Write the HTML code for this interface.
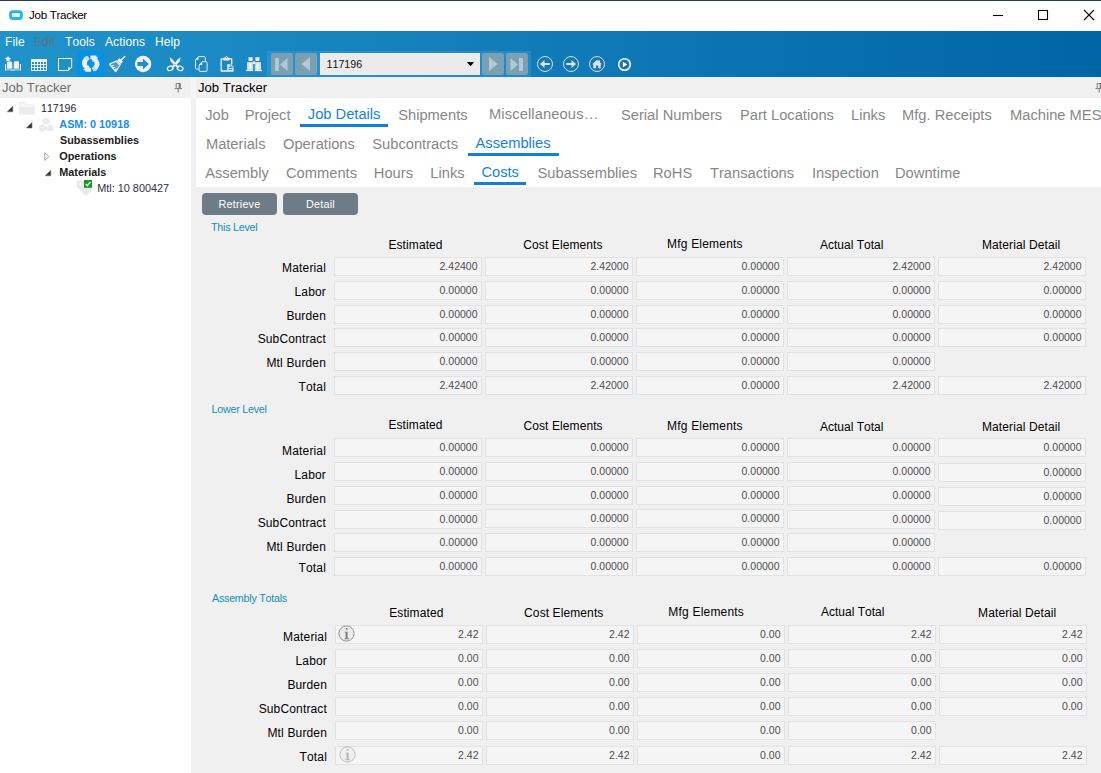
<!DOCTYPE html>
<html><head><meta charset="utf-8"><title>Job Tracker</title>
<style>
html,body{margin:0;padding:0;}
html{width:1101px;height:773px;overflow:hidden;background:#f0f0f0;}
body{font-kerning:none;width:1101px;height:773px;position:relative;overflow:hidden;background:#f0f0f0;font-family:"Liberation Sans",sans-serif;}
.t{position:absolute;white-space:nowrap;}
.a{position:absolute;}
.f{position:absolute;box-sizing:border-box;width:148px;height:19px;background:#f5f5f5;border:1px solid #e2e2e2;}
.v{position:absolute;right:3.5px;top:0;font-size:10.5px;line-height:16px;color:#4e4e4e;white-space:nowrap;}
.nb{position:absolute;top:53px;width:22px;height:22px;border-radius:2px;background:#7ba0b4;}
</style></head><body><div class="a" style="left:0;top:0;width:1101px;height:773px;overflow:hidden;">

<div class="a" style="left:0;top:0;width:1101px;height:31px;background:#fff;"></div>
<div class="a" style="left:0;top:0;width:1101px;height:1px;background:#2b3a55;"></div>
<svg class="a" style="left:8px;top:10px" width="16" height="12" viewBox="0 0 16 12"><rect x="2.7" y="1.7" width="10.6" height="6.8" rx="2" fill="#fff" stroke="#22b8ea" stroke-width="3"/></svg>
<div class="t" style="top:5.48px;font-size:11.6px;color:#000;line-height:20px;left:29.00px;letter-spacing:-0.3px;">Job Tracker</div>
<svg class="a" style="left:985px;top:5px" width="116" height="22" viewBox="0 0 116 22"><g stroke="#000" stroke-width="1.1" fill="none"><path d="M8 10.5H18"/><rect x="53.5" y="5.5" width="9" height="9"/><path d="M99 5L109 15M109 5L99 15"/></g></svg>
<div class="a" style="left:0;top:31px;width:1101px;height:46px;background:linear-gradient(90deg,#2093cb 0%,#117ab8 50%,#0065a5 100%);"></div>
<div class="t" style="top:31.84px;font-size:12px;color:#fff;line-height:20px;left:5.00px;letter-spacing:0.12px;">File</div>
<div class="t" style="top:31.84px;font-size:12px;color:#66737a;line-height:20px;left:34.00px;letter-spacing:0.12px;">Edit</div>
<div class="t" style="top:31.84px;font-size:12px;color:#fff;line-height:20px;left:65.00px;letter-spacing:0.12px;">Tools</div>
<div class="t" style="top:31.84px;font-size:12px;color:#fff;line-height:20px;left:105.00px;letter-spacing:0.12px;">Actions</div>
<div class="t" style="top:31.84px;font-size:12px;color:#fff;line-height:20px;left:155.00px;letter-spacing:0.12px;">Help</div>
<div class="a" style="left:78px;top:51px;width:26px;height:26px;background:#0491e8;"></div>
<div class="a" style="left:267px;top:51px;width:264px;height:26px;background:rgba(60,170,225,0.35);"></div>
<div class="nb" style="left:271px"></div>
<div class="nb" style="left:295px"></div>
<div class="nb" style="left:482px"></div>
<div class="nb" style="left:506px"></div>
<svg class="a" style="left:271px;top:53px" width="260" height="22" viewBox="0 0 260 22"><g fill="#b2c8d4"><rect x="4" y="5" width="4" height="13"/><path d="M16.5 5V18L9 11.5Z"/><path d="M39 4V18L30.5 11Z"/><path d="M218 4V18L226.5 11Z"/><path d="M239.5 5V18L247 11.5Z"/><rect x="248" y="5" width="4" height="13"/></g></svg>
<div class="a" style="left:320px;top:53px;width:160px;height:22px;background:#ebebeb;"></div>
<div class="t" style="top:54.29px;font-size:10.7px;color:#111;line-height:20px;left:326.50px;">117196</div>
<svg class="a" style="left:466px;top:61px" width="9" height="6" viewBox="0 0 9 6"><path d="M0.8 1H8.2L4.5 5.2Z" fill="#000"/></svg>
<svg class="a" style="left:0;top:51px" width="660" height="26" viewBox="0 51 660 26">
<g fill="#f3efec" stroke="none">
<!-- book with star -->
<path d="M8 55.700L9 57.700L11.200 58L9.600 59.500L10 61.600L8 60.600L6 61.600L6.400 59.500L4.800 58L7 57.700Z"/>
<rect x="7" y="61.500" width="5" height="7.300" rx="0.800"/>
<rect x="14" y="61.300" width="5" height="7.500" rx="0.800"/>
<rect x="5" y="64" width="1" height="6.300"/>
<rect x="20" y="64" width="1" height="6.300"/>
<rect x="5" y="69.400" width="16" height="0.900" opacity="0.850"/>
<rect x="11" y="70" width="4" height="0.900" opacity="0.600"/>
<rect x="12.300" y="63" width="1.400" height="6" opacity="0.350"/>
<!-- grid -->
<path fill-rule="evenodd" d="M31 59H47V71H31Z M32 62h2v2h-2Z M35 62h2v2h-2Z M38 62h2v2h-2Z M41 62h2v2h-2Z M44 62h2v2h-2Z M32 65h2v2h-2Z M35 65h2v2h-2Z M38 65h2v2h-2Z M41 65h2v2h-2Z M44 65h2v2h-2Z M32 68h2v2h-2Z M35 68h2v2h-2Z M38 68h2v2h-2Z M41 68h2v2h-2Z M44 68h2v2h-2Z"/>
<!-- note -->
<path d="M58.500 58.500H71.700V67.500L68.200 70.500H58.500Z" fill="none" stroke="#f3efec" stroke-width="1"/>
<path d="M68 67.400H71.800L68 70.800Z"/>
</g>
<!-- refresh -->
<g><path d="M86.600 56L88.100 56.500L89.300 58.200L89.600 59.100L87.800 61.100L86.900 62.800L87.100 65.100L88.100 65.800L88.800 65.300L89.300 67.100L89.600 67.800L91.100 68.200L91.100 71.700L85.200 71.700L85.200 70.700L83.500 69.800L83.400 69.200L84.700 68.800L83 66.800L82.100 64.500L82 62.100L82.700 60.100L83.900 58.100L85.200 56.700Z" fill="#efedec"/><g fill="#0491e8" opacity="0.700"><rect x="85.400" y="57.600" width="0.800" height="0.800"/><rect x="86.500" y="58.700" width="0.800" height="0.800"/><rect x="87.600" y="59.800" width="0.800" height="0.800"/><rect x="86.700" y="56.700" width="0.800" height="0.800"/><rect x="87.900" y="57.800" width="0.800" height="0.800"/></g></g>
<g transform="rotate(180 90.750 63.600)"><path d="M86.600 56L88.100 56.500L89.300 58.200L89.600 59.100L87.800 61.100L86.900 62.800L87.100 65.100L88.100 65.800L88.800 65.300L89.300 67.100L89.600 67.800L91.100 68.200L91.100 71.700L85.200 71.700L85.200 70.700L83.500 69.800L83.400 69.200L84.700 68.800L83 66.800L82.100 64.500L82 62.100L82.700 60.100L83.900 58.100L85.200 56.700Z" fill="#efedec"/><g fill="#0491e8" opacity="0.700"><rect x="85.400" y="57.600" width="0.800" height="0.800"/><rect x="86.500" y="58.700" width="0.800" height="0.800"/><rect x="87.600" y="59.800" width="0.800" height="0.800"/><rect x="86.700" y="56.700" width="0.800" height="0.800"/><rect x="87.900" y="57.800" width="0.800" height="0.800"/></g></g>
<!-- broom -->
<g stroke="#f3efec" fill="none" stroke-linecap="round">
<path d="M124.700 56.500L120.500 60.600" stroke-width="1.600"/>
<path d="M118.300 59.200L121.900 62.900" stroke-width="3" stroke-linecap="butt"/>
<path d="M116.800 60.900L109.600 64L115.700 71.600L120.300 64.500Z" stroke-width="1.300" stroke-linejoin="round" fill="rgba(243,239,236,0.180)"/>
<path d="M111.500 66.400L113.500 65.300M112.900 68.300L115.100 67M114.400 70L116.400 68.800" stroke-width="1"/>
<path d="M116.400 62.100L119.600 65.300" stroke-width="0.900"/>
</g>
<!-- circle arrow -->
<circle cx="143.100" cy="64" r="8.200" fill="#f3efec"/>
<path d="M137.400 62H143V58.800L148.900 64L143 69.300V66H137.400Z" fill="#1d8ec7"/>
<!-- scissors -->
<g fill="#f3efec">
<path d="M169.600 57.200L172.500 59.300L176.600 64.400L179 67L177.800 67.900L174.400 65.600L170.500 61.300Z"/>
<path d="M180.700 57.200L177.800 59.300L173.700 64.400L171.300 67L172.500 67.900L175.900 65.600L179.800 61.300Z"/>
</g>
<circle cx="175.150" cy="64.500" r="0.550" fill="#1d8ec7"/>
<g fill="none" stroke="#f3efec" stroke-width="1.300">
<ellipse cx="170.200" cy="68.300" rx="2.900" ry="2.150" transform="rotate(-18 170.200 68.300)"/>
<ellipse cx="180.100" cy="68.300" rx="2.900" ry="2.150" transform="rotate(18 180.100 68.300)"/>
</g>
<!-- copy -->
<g fill="none" stroke="#e9edf0" stroke-width="1" stroke-linejoin="round">
<path d="M198.500 56.600H204.200Q205.300 56.600 205.300 57.800V61.300M198.500 56.600L195.500 59.800V68Q195.500 69.100 196.600 69.100H198.600"/>
<path d="M202.200 61.700H206Q207.100 61.700 207.100 62.800V70.300Q207.100 71.400 206 71.400H200.200Q199.100 71.400 199.100 70.300V65Z"/>
</g>
<path d="M198.500 56.800V59.800H195.700Z" fill="#f3efec"/>
<path d="M202.200 61.900V65H199.300Z" fill="#f3efec"/>
<!-- paste -->
<g fill="none" stroke="#f3efec" stroke-width="1.300" stroke-linejoin="round">
<path d="M227.500 71H221.200V58.800H231.700V64.500"/>
</g>
<path fill-rule="evenodd" d="M223.300 58.300Q223.300 57.600 224.500 57.600H225.100Q225.300 56 226.400 56Q227.600 56 227.800 57.600H228.400Q229.500 57.600 229.500 58.300V60.400H223.300Z M225.800 57.300a0.600 0.600 0 1 0 1.200 0a0.600 0.600 0 1 0 -1.200 0Z" fill="#f3efec"/>
<path d="M227.200 64.300H231.200L233.600 66.700V71.800H227.200Z" fill="#e4ebef"/>
<path d="M228.500 67.500H232.300M228.500 69.500H232.300" stroke="#1a86c2" stroke-width="0.900"/>
<path d="M230.700 64.600V67H233.300" stroke="#1a86c2" stroke-width="0.700" fill="none"/>
<!-- binoculars -->
<g fill="#f3efec">
<path d="M248.300 57.200H252.800L252.400 60.900H248.700Z"/>
<path d="M255.200 57.200H259.700L259.300 60.900H255.600Z"/>
<rect x="247" y="62.200" width="6.200" height="7.600"/>
<rect x="254.800" y="62.200" width="6.200" height="7.600"/>
<rect x="246.100" y="69.800" width="7.100" height="1.300"/>
<rect x="254.800" y="69.800" width="7.200" height="1.300"/>
<rect x="253" y="61.300" width="2" height="2.600"/>
</g>
<g stroke="#2a90c8" stroke-width="0.500" opacity="0.600">
<path d="M248 62.600V69.500M252.300 62.600V69.500M255.700 62.600V69.500M260 62.600V69.500"/>
</g>
<!-- nav circles -->
<g fill="none" stroke="#d4e0e8" stroke-width="1">
<circle cx="545" cy="64" r="7.500"/>
<circle cx="571" cy="64" r="7.500"/>
<circle cx="597" cy="64" r="7.500"/>
</g>
<g fill="#e4e2e0">
<path d="M540 64L544.500 60V62.900H549.800V65.100H544.500V68Z"/>
<path d="M576 64L571.500 60V62.900H566.200V65.100H571.500V68Z"/>
<path d="M592.300 64.300L597 59.800L598.500 61.200V60.200H600V62.600L601.700 64.300H600.700V68.300H598.200V65.500H596V68.300H593.300V64.300Z"/>
</g>
<circle cx="624.500" cy="64.500" r="5.800" fill="none" stroke="#fff" stroke-width="1.500"/>
<path d="M622.900 61.700V67.300L627.300 64.500Z" fill="#fff"/>
</svg>

<div class="a" style="left:0;top:77px;width:1101px;height:21px;background:#f0f0f0;"></div>
<div class="a" style="left:0;top:98px;width:191px;height:675px;background:#fff;"></div>
<div class="a" style="left:191px;top:77px;width:5px;height:21px;background:#f5f5f5;"></div>
<div class="a" style="left:196px;top:98px;width:905px;height:89px;background:#fff;"></div>
<div class="t" style="top:78.46px;font-size:13.1px;color:#6e6e6e;line-height:20px;left:2.00px;">Job Tracker</div>
<div class="t" style="top:78.46px;font-size:13.1px;color:#000;line-height:20px;left:198.00px;">Job Tracker</div>
<svg class="a" style="left:174px;top:82px" width="9" height="11" viewBox="0 0 9 11"><path d="M2.2 1.5H6.2V6.2" fill="none" stroke="#7a7a7a" stroke-width="1"/><path d="M2.2 1.5V6.2" stroke="#7a7a7a" stroke-width="1" fill="none"/><rect x="4.7" y="1.5" width="1.8" height="5" fill="#7a7a7a"/><path d="M0.5 6.6H8" stroke="#7a7a7a" stroke-width="1"/><path d="M4.2 7V10.5" stroke="#7a7a7a" stroke-width="1"/></svg>
<svg class="a" style="left:1095px;top:82px" width="9" height="11" viewBox="0 0 9 11"><path d="M2.2 1.5H6.2V6.2" fill="none" stroke="#7a7a7a" stroke-width="1"/><path d="M2.2 1.5V6.2" stroke="#7a7a7a" stroke-width="1" fill="none"/><rect x="4.7" y="1.5" width="1.8" height="5" fill="#7a7a7a"/><path d="M0.5 6.6H8" stroke="#7a7a7a" stroke-width="1"/><path d="M4.2 7V10.5" stroke="#7a7a7a" stroke-width="1"/></svg>
<div class="t" style="top:97.83px;font-size:10.6px;color:#2a2033;line-height:20px;left:41.00px;">117196</div>
<div class="t" style="top:113.74px;font-size:10.85px;color:#158cf0;line-height:20px;font-weight:bold;left:59.30px;">ASM: 0 10918</div>
<div class="t" style="top:129.74px;font-size:10.85px;color:#1c1c1c;line-height:20px;font-weight:bold;left:60.00px;">Subassemblies</div>
<div class="t" style="top:145.64px;font-size:10.85px;color:#1c1c1c;line-height:20px;font-weight:bold;left:59.30px;">Operations</div>
<div class="t" style="top:161.54px;font-size:10.85px;color:#1c1c1c;line-height:20px;font-weight:bold;left:59.30px;">Materials</div>
<div class="t" style="top:177.64px;font-size:10.85px;color:#30304a;line-height:20px;left:97.30px;">Mtl: 10 800427</div>
<svg class="a" style="left:0;top:98px" width="191" height="102" viewBox="0 98 191 102">
<!-- expanders -->
<g fill="#333" stroke="#777" stroke-width="0.600">
<path d="M12.800 106.200V111.800H7.200Z"/>
<path d="M32 122.400V128H26.400Z"/>
<path d="M50.800 170.200V175.800H45.200Z"/>
</g>
<path d="M44.700 152.700V160.500L48.800 156.600Z" fill="#fff" stroke="#a0a0a0" stroke-width="0.900"/>
<!-- folder -->
<g fill="#ececec">
<path d="M19 101.500H24.500L25 102.500V104H19Z" opacity="0.800"/>
<rect x="19" y="103.700" width="16" height="3.200" opacity="0.550"/>
<rect x="19" y="107" width="16" height="7.600"/>
</g>
<!-- cubes -->
<g fill="#e9e9e9">
<path d="M46 117.700L49.700 119.300V123L46 124.800L42.300 123V119.300Z"/>
<path d="M42.300 124.500L46 126.200V130L42.300 131.800L38.700 130V126.200Z"/>
<path d="M49.800 124.500L53.500 126.200V130L49.800 131.800L46.200 130V126.200Z"/>
</g>
<g stroke="#f6f6f6" stroke-width="0.700" fill="none">
<path d="M42.500 119.500L46 121L49.500 119.500M46 121V124.500"/>
<path d="M38.900 126.400L42.300 127.900L45.700 126.400M42.300 127.900V131.500"/>
<path d="M46.400 126.400L49.800 127.900L53.300 126.400M49.800 127.900V131.500"/>
</g>
<!-- tag + check -->
<path d="M76.500 180.500H92V190.500L86 196L76.800 187Z" fill="#e9e9e9"/>
<circle cx="80.500" cy="184" r="1" fill="#fff"/>
<rect x="84" y="180" width="8" height="7.800" fill="#149a1c"/>
<path d="M85.700 183.900L87.400 185.700L90.400 181.800" fill="none" stroke="#fff" stroke-width="1.300"/>
</svg>

<div class="t" style="top:104.91px;font-size:14.7px;color:#878787;line-height:20px;left:205.20px;">Job</div>
<div class="t" style="top:104.91px;font-size:14.7px;color:#878787;line-height:20px;left:244.80px;">Project</div>
<div class="t" style="top:103.91px;font-size:14.7px;color:#1583dc;line-height:20px;left:307.80px;">Job Details</div>
<div class="t" style="top:104.91px;font-size:14.7px;color:#878787;line-height:20px;left:398.20px;">Shipments</div>
<div class="t" style="top:103.91px;font-size:14.7px;color:#878787;line-height:20px;left:489.00px;letter-spacing:0.12px;">Miscellaneous…</div>
<div class="t" style="top:104.91px;font-size:14.7px;color:#878787;line-height:20px;left:621.00px;">Serial Numbers</div>
<div class="t" style="top:104.91px;font-size:14.7px;color:#878787;line-height:20px;left:740.00px;">Part Locations</div>
<div class="t" style="top:104.91px;font-size:14.7px;color:#878787;line-height:20px;left:851.00px;">Links</div>
<div class="t" style="top:104.91px;font-size:14.7px;color:#878787;line-height:20px;left:902.00px;">Mfg. Receipts</div>
<div class="t" style="top:104.91px;font-size:14.7px;color:#878787;line-height:20px;left:1010.00px;">Machine MES</div>
<div class="t" style="top:133.91px;font-size:14.7px;color:#878787;line-height:20px;left:205.90px;">Materials</div>
<div class="t" style="top:133.91px;font-size:14.7px;color:#878787;line-height:20px;left:283.00px;">Operations</div>
<div class="t" style="top:133.91px;font-size:14.7px;color:#878787;line-height:20px;left:372.30px;">Subcontracts</div>
<div class="t" style="top:132.91px;font-size:14.7px;color:#1583dc;line-height:20px;left:475.50px;">Assemblies</div>
<div class="t" style="top:162.91px;font-size:14.7px;color:#878787;line-height:20px;left:205.20px;">Assembly</div>
<div class="t" style="top:162.91px;font-size:14.7px;color:#878787;line-height:20px;left:286.00px;">Comments</div>
<div class="t" style="top:162.91px;font-size:14.7px;color:#878787;line-height:20px;left:373.80px;">Hours</div>
<div class="t" style="top:162.91px;font-size:14.7px;color:#878787;line-height:20px;left:430.30px;">Links</div>
<div class="t" style="top:161.91px;font-size:14.7px;color:#1583dc;line-height:20px;left:481.40px;">Costs</div>
<div class="t" style="top:162.91px;font-size:14.7px;color:#878787;line-height:20px;left:537.50px;">Subassemblies</div>
<div class="t" style="top:162.91px;font-size:14.7px;color:#878787;line-height:20px;left:653.00px;">RoHS</div>
<div class="t" style="top:162.91px;font-size:14.7px;color:#878787;line-height:20px;left:710.00px;">Transactions</div>
<div class="t" style="top:162.91px;font-size:14.7px;color:#878787;line-height:20px;left:812.00px;">Inspection</div>
<div class="t" style="top:162.91px;font-size:14.7px;color:#878787;line-height:20px;left:895.00px;">Downtime</div>
<div class="a" style="left:300px;top:124px;width:88px;height:3px;background:#0f80dc;"></div>
<div class="a" style="left:468px;top:153px;width:91px;height:3px;background:#0f80dc;"></div>
<div class="a" style="left:474px;top:182px;width:52px;height:3px;background:#0f80dc;"></div>
<div class="a" style="left:202px;top:193px;width:75px;height:22px;border-radius:4px;background:#6e7c85;color:#fff;font-size:10.8px;line-height:23px;text-align:center;letter-spacing:0.2px;">Retrieve</div>
<div class="a" style="left:283px;top:193px;width:75px;height:22px;border-radius:4px;background:#6e7c85;color:#fff;font-size:10.8px;line-height:23px;text-align:center;letter-spacing:0.2px;">Detail</div>
<div class="t" style="top:217.28px;font-size:10.75px;color:#1390b7;line-height:20px;left:211.00px;letter-spacing:-0.26px;">This Level</div>
<div class="t" style="top:234.84px;font-size:12px;color:#000;line-height:20px;left:388.40px;letter-spacing:0.1px;">Estimated</div>
<div class="t" style="top:234.84px;font-size:12px;color:#000;line-height:20px;left:523.30px;letter-spacing:0.1px;">Cost Elements</div>
<div class="t" style="top:233.84px;font-size:12px;color:#000;line-height:20px;left:667.00px;letter-spacing:0.2px;">Mfg Elements</div>
<div class="t" style="top:234.84px;font-size:12px;color:#000;line-height:20px;left:820.00px;letter-spacing:0px;">Actual Total</div>
<div class="t" style="top:234.84px;font-size:12px;color:#000;line-height:20px;left:982.00px;letter-spacing:0.1px;">Material Detail</div>
<div class="t" style="top:257.84px;font-size:12px;color:#000;line-height:20px;right:775.00px;text-align:right;letter-spacing:0.15px;">Material</div>
<div class="f" style="left:334px;top:257px"><span class="v">2.42400</span></div>
<div class="f" style="left:485px;top:257px"><span class="v">2.42000</span></div>
<div class="f" style="left:636px;top:257px"><span class="v">0.00000</span></div>
<div class="f" style="left:787px;top:257px"><span class="v">2.42000</span></div>
<div class="f" style="left:938px;top:257px"><span class="v">2.42000</span></div>
<div class="t" style="top:281.84px;font-size:12px;color:#000;line-height:20px;right:775.00px;text-align:right;letter-spacing:0.15px;">Labor</div>
<div class="f" style="left:334px;top:281px"><span class="v">0.00000</span></div>
<div class="f" style="left:485px;top:281px"><span class="v">0.00000</span></div>
<div class="f" style="left:636px;top:281px"><span class="v">0.00000</span></div>
<div class="f" style="left:787px;top:281px"><span class="v">0.00000</span></div>
<div class="f" style="left:938px;top:281px"><span class="v">0.00000</span></div>
<div class="t" style="top:305.84px;font-size:12px;color:#000;line-height:20px;right:775.00px;text-align:right;letter-spacing:0.15px;">Burden</div>
<div class="f" style="left:334px;top:305px"><span class="v">0.00000</span></div>
<div class="f" style="left:485px;top:305px"><span class="v">0.00000</span></div>
<div class="f" style="left:636px;top:305px"><span class="v">0.00000</span></div>
<div class="f" style="left:787px;top:305px"><span class="v">0.00000</span></div>
<div class="f" style="left:938px;top:305px"><span class="v">0.00000</span></div>
<div class="t" style="top:328.84px;font-size:12px;color:#000;line-height:20px;right:775.00px;text-align:right;letter-spacing:0.15px;">SubContract</div>
<div class="f" style="left:334px;top:328px"><span class="v">0.00000</span></div>
<div class="f" style="left:485px;top:328px"><span class="v">0.00000</span></div>
<div class="f" style="left:636px;top:328px"><span class="v">0.00000</span></div>
<div class="f" style="left:787px;top:328px"><span class="v">0.00000</span></div>
<div class="f" style="left:938px;top:328px"><span class="v">0.00000</span></div>
<div class="t" style="top:352.84px;font-size:12px;color:#000;line-height:20px;right:775.00px;text-align:right;letter-spacing:0.15px;">Mtl Burden</div>
<div class="f" style="left:334px;top:352px"><span class="v">0.00000</span></div>
<div class="f" style="left:485px;top:352px"><span class="v">0.00000</span></div>
<div class="f" style="left:636px;top:352px"><span class="v">0.00000</span></div>
<div class="f" style="left:787px;top:352px"><span class="v">0.00000</span></div>
<div class="t" style="top:376.84px;font-size:12px;color:#000;line-height:20px;right:775.00px;text-align:right;letter-spacing:0.15px;">Total</div>
<div class="f" style="left:334px;top:376px"><span class="v">2.42400</span></div>
<div class="f" style="left:485px;top:376px"><span class="v">2.42000</span></div>
<div class="f" style="left:636px;top:376px"><span class="v">0.00000</span></div>
<div class="f" style="left:787px;top:376px"><span class="v">2.42000</span></div>
<div class="f" style="left:938px;top:376px"><span class="v">2.42000</span></div>
<div class="t" style="top:399.28px;font-size:10.75px;color:#1390b7;line-height:20px;left:211.50px;letter-spacing:-0.26px;">Lower Level</div>
<div class="t" style="top:414.84px;font-size:12px;color:#000;line-height:20px;left:388.40px;letter-spacing:0.1px;">Estimated</div>
<div class="t" style="top:415.84px;font-size:12px;color:#000;line-height:20px;left:523.40px;letter-spacing:0.1px;">Cost Elements</div>
<div class="t" style="top:415.84px;font-size:12px;color:#000;line-height:20px;left:667.00px;letter-spacing:0.2px;">Mfg Elements</div>
<div class="t" style="top:416.84px;font-size:12px;color:#000;line-height:20px;left:820.00px;letter-spacing:0px;">Actual Total</div>
<div class="t" style="top:416.84px;font-size:12px;color:#000;line-height:20px;left:982.00px;letter-spacing:0.1px;">Material Detail</div>
<div class="t" style="top:440.84px;font-size:12px;color:#000;line-height:20px;right:775.00px;text-align:right;letter-spacing:0.15px;">Material</div>
<div class="f" style="left:334px;top:438px"><span class="v">0.00000</span></div>
<div class="f" style="left:485px;top:438px"><span class="v">0.00000</span></div>
<div class="f" style="left:636px;top:438px"><span class="v">0.00000</span></div>
<div class="f" style="left:787px;top:438px"><span class="v">0.00000</span></div>
<div class="f" style="left:938px;top:438px"><span class="v">0.00000</span></div>
<div class="t" style="top:464.84px;font-size:12px;color:#000;line-height:20px;right:775.00px;text-align:right;letter-spacing:0.15px;">Labor</div>
<div class="f" style="left:334px;top:462px"><span class="v">0.00000</span></div>
<div class="f" style="left:485px;top:462px"><span class="v">0.00000</span></div>
<div class="f" style="left:636px;top:462px"><span class="v">0.00000</span></div>
<div class="f" style="left:787px;top:462px"><span class="v">0.00000</span></div>
<div class="f" style="left:938px;top:463px"><span class="v">0.00000</span></div>
<div class="t" style="top:488.84px;font-size:12px;color:#000;line-height:20px;right:775.00px;text-align:right;letter-spacing:0.15px;">Burden</div>
<div class="f" style="left:334px;top:486px"><span class="v">0.00000</span></div>
<div class="f" style="left:485px;top:486px"><span class="v">0.00000</span></div>
<div class="f" style="left:636px;top:486px"><span class="v">0.00000</span></div>
<div class="f" style="left:787px;top:486px"><span class="v">0.00000</span></div>
<div class="f" style="left:938px;top:487px"><span class="v">0.00000</span></div>
<div class="t" style="top:512.84px;font-size:12px;color:#000;line-height:20px;right:775.00px;text-align:right;letter-spacing:0.15px;">SubContract</div>
<div class="f" style="left:334px;top:510px"><span class="v">0.00000</span></div>
<div class="f" style="left:485px;top:509px"><span class="v">0.00000</span></div>
<div class="f" style="left:636px;top:509px"><span class="v">0.00000</span></div>
<div class="f" style="left:787px;top:510px"><span class="v">0.00000</span></div>
<div class="f" style="left:938px;top:511px"><span class="v">0.00000</span></div>
<div class="t" style="top:536.84px;font-size:12px;color:#000;line-height:20px;right:775.00px;text-align:right;letter-spacing:0.15px;">Mtl Burden</div>
<div class="f" style="left:334px;top:533px"><span class="v">0.00000</span></div>
<div class="f" style="left:485px;top:533px"><span class="v">0.00000</span></div>
<div class="f" style="left:636px;top:533px"><span class="v">0.00000</span></div>
<div class="f" style="left:787px;top:533px"><span class="v">0.00000</span></div>
<div class="t" style="top:557.84px;font-size:12px;color:#000;line-height:20px;right:775.00px;text-align:right;letter-spacing:0.15px;">Total</div>
<div class="f" style="left:334px;top:557px"><span class="v">0.00000</span></div>
<div class="f" style="left:485px;top:557px"><span class="v">0.00000</span></div>
<div class="f" style="left:636px;top:557px"><span class="v">0.00000</span></div>
<div class="f" style="left:787px;top:557px"><span class="v">0.00000</span></div>
<div class="f" style="left:938px;top:557px"><span class="v">0.00000</span></div>
<div class="t" style="top:588.28px;font-size:10.75px;color:#1390b7;line-height:20px;left:212.00px;letter-spacing:-0.26px;">Assembly Totals</div>
<div class="t" style="top:603.24px;font-size:12px;color:#000;line-height:20px;left:389.20px;letter-spacing:0.1px;">Estimated</div>
<div class="t" style="top:603.24px;font-size:12px;color:#000;line-height:20px;left:524.10px;letter-spacing:0.1px;">Cost Elements</div>
<div class="t" style="top:602.24px;font-size:12px;color:#000;line-height:20px;left:668.30px;letter-spacing:0.2px;">Mfg Elements</div>
<div class="t" style="top:602.24px;font-size:12px;color:#000;line-height:20px;left:821.00px;letter-spacing:0px;">Actual Total</div>
<div class="t" style="top:603.24px;font-size:12px;color:#000;line-height:20px;left:978.10px;letter-spacing:0.1px;">Material Detail</div>
<div class="t" style="top:627.24px;font-size:12px;color:#000;line-height:20px;right:774.00px;text-align:right;letter-spacing:0.15px;">Material</div>
<div class="f" style="left:335px;top:625px"><svg style="position:absolute;left:2.1px;top:-0.9px" width="17" height="17" viewBox="0 0 17 17"><circle cx="8.5" cy="8.5" r="7.6" fill="#ececec" stroke="#848484" stroke-width="0.9"/><path d="M6.6 6.7H9.6V13.2H10.8V14.2H6.5V13.2H7.6V7.6H6.6Z" fill="#7c7c7c"/><rect x="7.7" y="3.1" width="1.8" height="1.7" rx="0.5" fill="#7c7c7c"/></svg><span class="v">2.42</span></div>
<div class="f" style="left:486px;top:625px"><span class="v">2.42</span></div>
<div class="f" style="left:637px;top:625px"><span class="v">0.00</span></div>
<div class="f" style="left:788px;top:625px"><span class="v">2.42</span></div>
<div class="f" style="left:939px;top:625px"><span class="v">2.42</span></div>
<div class="t" style="top:651.24px;font-size:12px;color:#000;line-height:20px;right:774.00px;text-align:right;letter-spacing:0.15px;">Labor</div>
<div class="f" style="left:335px;top:649px"><span class="v">0.00</span></div>
<div class="f" style="left:486px;top:649px"><span class="v">0.00</span></div>
<div class="f" style="left:637px;top:649px"><span class="v">0.00</span></div>
<div class="f" style="left:788px;top:649px"><span class="v">0.00</span></div>
<div class="f" style="left:939px;top:649px"><span class="v">0.00</span></div>
<div class="t" style="top:675.24px;font-size:12px;color:#000;line-height:20px;right:774.00px;text-align:right;letter-spacing:0.15px;">Burden</div>
<div class="f" style="left:335px;top:673px"><span class="v">0.00</span></div>
<div class="f" style="left:486px;top:673px"><span class="v">0.00</span></div>
<div class="f" style="left:637px;top:673px"><span class="v">0.00</span></div>
<div class="f" style="left:788px;top:673px"><span class="v">0.00</span></div>
<div class="f" style="left:939px;top:673px"><span class="v">0.00</span></div>
<div class="t" style="top:699.24px;font-size:12px;color:#000;line-height:20px;right:774.00px;text-align:right;letter-spacing:0.15px;">SubContract</div>
<div class="f" style="left:335px;top:697px"><span class="v">0.00</span></div>
<div class="f" style="left:486px;top:697px"><span class="v">0.00</span></div>
<div class="f" style="left:637px;top:697px"><span class="v">0.00</span></div>
<div class="f" style="left:788px;top:697px"><span class="v">0.00</span></div>
<div class="f" style="left:939px;top:697px"><span class="v">0.00</span></div>
<div class="t" style="top:723.24px;font-size:12px;color:#000;line-height:20px;right:774.00px;text-align:right;letter-spacing:0.15px;">Mtl Burden</div>
<div class="f" style="left:335px;top:721px"><span class="v">0.00</span></div>
<div class="f" style="left:486px;top:721px"><span class="v">0.00</span></div>
<div class="f" style="left:637px;top:721px"><span class="v">0.00</span></div>
<div class="f" style="left:788px;top:721px"><span class="v">0.00</span></div>
<div class="t" style="top:747.24px;font-size:12px;color:#000;line-height:20px;right:774.00px;text-align:right;letter-spacing:0.15px;">Total</div>
<div class="f" style="left:335px;top:746px"><svg style="position:absolute;left:2.5px;opacity:0.55;top:-0.9px" width="17" height="17" viewBox="0 0 17 17"><circle cx="8.5" cy="8.5" r="7.6" fill="#ececec" stroke="#848484" stroke-width="0.9"/><path d="M6.6 6.7H9.6V13.2H10.8V14.2H6.5V13.2H7.6V7.6H6.6Z" fill="#7c7c7c"/><rect x="7.7" y="3.1" width="1.8" height="1.7" rx="0.5" fill="#7c7c7c"/></svg><span class="v">2.42</span></div>
<div class="f" style="left:486px;top:746px"><span class="v">2.42</span></div>
<div class="f" style="left:637px;top:746px"><span class="v">0.00</span></div>
<div class="f" style="left:788px;top:746px"><span class="v">2.42</span></div>
<div class="f" style="left:939px;top:746px"><span class="v">2.42</span></div>
</div></body></html>
